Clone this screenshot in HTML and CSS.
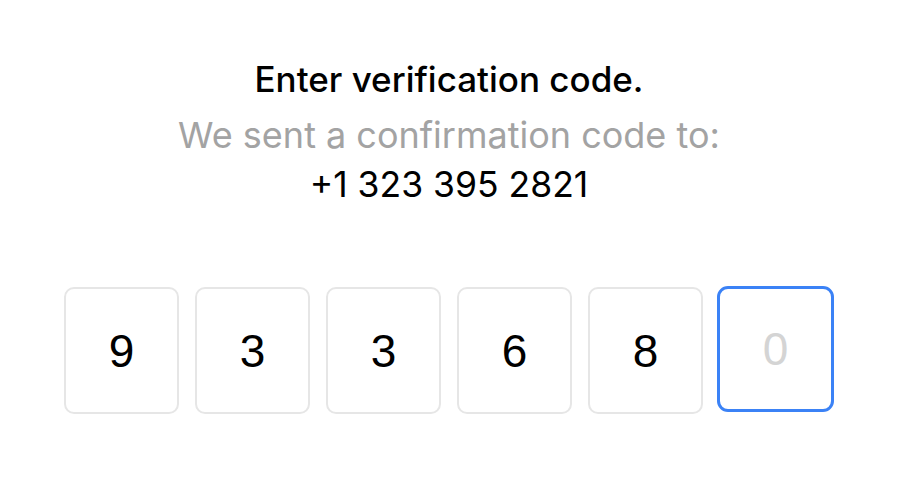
FILE: index.html
```html
<!DOCTYPE html>
<html>
<head>
<meta charset="utf-8">
<link rel="stylesheet" href="styles.css">
</head>
<body>
<main class="page">
  <section class="header">
    <h1 class="title">Enter verification code.</h1>
    <p class="subtitle">We sent a confirmation code to:</p>
    <p class="phone">+1 323 395 2821</p>
  </section>
  <div class="code">
    <div class="digit">9</div>
    <div class="digit">3</div>
    <div class="digit">3</div>
    <div class="digit">6</div>
    <div class="digit">8</div>
    <div class="digit focused"><span class="placeholder">0</span></div>
  </div>
</main>
</body>
</html>
```
FILE: styles.css
```css
* { box-sizing: border-box; }
html, body { margin: 0; padding: 0; background: #ffffff; }
body {
  width: 898px;
  height: 481px;
  font-family: Inter, "Noto Sans", sans-serif;
  color: #000;
}
.page {
  display: flex;
  flex-direction: column;
  align-items: center;
  padding-top: 57px;
}
.header {
  display: flex;
  flex-direction: column;
  align-items: center;
  text-align: center;
}
.title {
  margin: 0;
  font-size: 35px;
  font-weight: 460;
  line-height: 44px;
  white-space: nowrap;
}
.subtitle {
  margin: 9px 0 0;
  font-size: 36px;
  font-weight: 400;
  color: #a3a3a3;
  line-height: 50px;
  white-space: nowrap;
}
.phone {
  margin: 0;
  font-size: 35.5px;
  font-weight: 400;
  line-height: 50px;
  white-space: nowrap;
}
.code {
  display: flex;
  gap: 16px;
  margin-top: 77px;
}
.digit {
  width: 115px;
  height: 127px;
  border: 2px solid #e6e6e6;
  border-radius: 10px;
  display: flex;
  align-items: center;
  justify-content: center;
  font-family: "Liberation Sans", Arial, sans-serif;
  font-size: 46px;
  color: #000;
}
.digit.focused {
  width: 117px;
  margin-left: -2px;
  height: 126px;
  margin-top: -1px;
  border: 3px solid #3b82f6;
  border-radius: 11px;
}
.placeholder { color: #d4d4d4; }
```
